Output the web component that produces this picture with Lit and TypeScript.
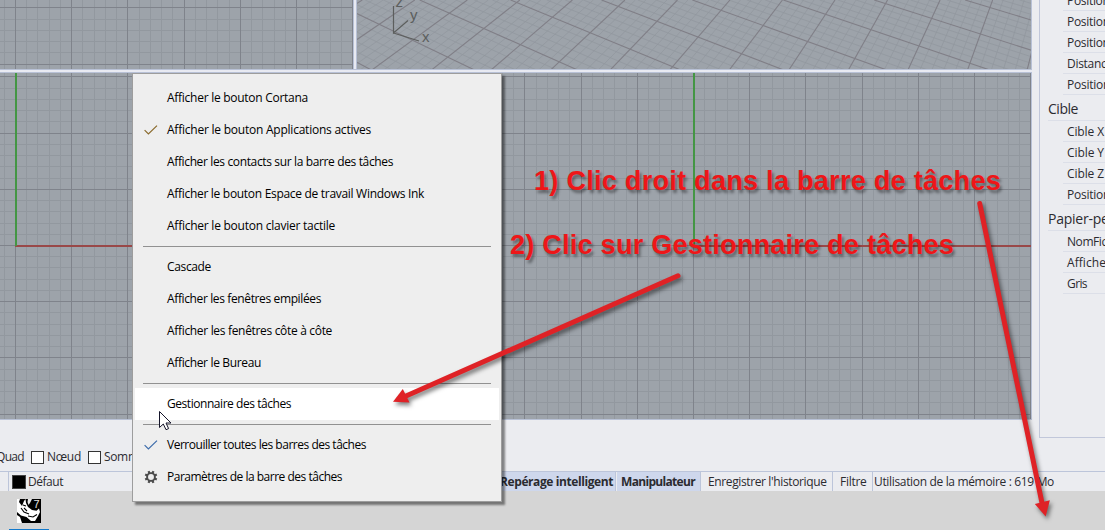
import { LitElement, html, svg, css, nothing } from "lit";
import { customElement, property } from "lit/decorators.js";

/** Text whose letter spacing is adjusted so that it spans a given width. */
@customElement("fit-text")
class FitText extends LitElement {
  static styles = css`
    :host { display: inline-block; white-space: pre; }
  `;
  @property({ type: Number }) w = 0;
  @property() text = "";
  render() {
    return html`<span>${this.text}</span>`;
  }
  updated() {
    const span = this.renderRoot.querySelector("span") as HTMLElement;
    span.style.letterSpacing = "0px";
    if (this.w) {
      const natural = span.getBoundingClientRect().width;
      span.style.letterSpacing = (this.w - natural) / this.text.length + "px";
    }
  }
}

const STEP = 56.22;

/** Orthographic grid of a viewport, with optional axes meeting at (ox, oy). */
function ortho(w: number, h: number, ox: number, oy: number, axes: boolean) {
  const minor: unknown[] = [];
  const major: unknown[] = [];
  const add = (v: number, i: number, vertical: boolean) => {
    const p = Math.round(v);
    const isMajor = ((i % 5) + 5) % 5 === 0;
    const cls = isMajor ? "major" : "minor";
    (isMajor ? major : minor).push(
      vertical
        ? svg`<rect class=${cls} x=${p} y="0" width="1" height=${h}></rect>`
        : svg`<rect class=${cls} x="0" y=${p} width=${w} height="1"></rect>`
    );
  };
  for (let i = -70; i < 70; i++) {
    const x = ox + (i * STEP) / 5;
    const y = oy + (i * STEP) / 5;
    if (x >= -0.5 && x < w) add(x, i, true);
    if (y >= -0.5 && y < h) add(y, i, false);
  }
  return html`<svg class="grid" width=${w} height=${h}>
    ${minor}${major}
    ${axes
      ? svg`<rect class="red" x=${ox} y=${oy} width=${w - ox} height="2"></rect>
            <rect class="green" x=${ox} y="0" width="2" height=${oy + 1}></rect>`
      : nothing}
  </svg>`;
}

/** Perspective grid: two line families running to vanishing points on one horizon. */
function perspective() {
  const horizon = -523;
  const minor: unknown[] = [];
  const major: unknown[] = [];
  const family = (start: number, step: number, vx: number, from: number, to: number) => {
    for (let i = from; i < to; i++) {
      const x0 = start + (i * step) / 5;
      const x1 = x0 + ((x0 - vx) * 70) / -horizon;
      const isMajor = ((i % 5) + 5) % 5 === 0;
      (isMajor ? major : minor).push(
        svg`<line class=${isMajor ? "pmajor" : "pminor"} x1=${x0 - 357} y1="0" x2=${x1 - 357} y2="70"></line>`
      );
    }
  };
  family(419.7, 90.9, -760, -12, 40);
  family(467.3, 52.53, 1180, -12, 64);
  return html`<svg class="grid" width="674" height="69">
    ${minor}${major}
    <g class="gizmo">
      <path d="M36.5 6V33L51 20.5M36.5 33L62 41"></path>
      <text x="38.5" y="7">z</text>
      <text x="53" y="20">y</text>
      <text x="65" y="42">x</text>
    </g>
  </svg>`;
}

const check = (cls: string) => html`<svg class="ico" width="16" height="16" viewBox="0 0 16 16">
  <path class=${cls} d="M2.6 8.2L6.4 12L15 3.6"></path>
</svg>`;

const gear = html`<svg class="ico" width="16" height="16" viewBox="-1 0 16 16">
  <circle class="ring" cx="8" cy="8" r="3.9"></circle>
  ${[0, 45, 90, 135, 180, 225, 270, 315].map(
    (a) => svg`<rect class="tooth" x="6.9" y="1.7" width="2.2" height="2.6" transform="rotate(${a + 22.5} 8 8)"></rect>`
  )}
</svg>`;

type Item = { t: string; w: number; icon?: unknown; hot?: boolean } | null;
const MENU: Item[] = [
  { t: "Afficher le bouton Cortana", w: 141 },
  { t: "Afficher le bouton Applications actives", w: 204, icon: check("tick amber") },
  { t: "Afficher les contacts sur la barre des tâches", w: 226 },
  { t: "Afficher le bouton Espace de travail Windows Ink", w: 257 },
  { t: "Afficher le bouton clavier tactile", w: 168 },
  null,
  { t: "Cascade", w: 44 },
  { t: "Afficher les fenêtres empilées", w: 154 },
  { t: "Afficher les fenêtres côte à côte", w: 165 },
  { t: "Afficher le Bureau", w: 94 },
  null,
  { t: "Gestionnaire des tâches", w: 124, hot: true },
  null,
  { t: "Verrouiller toutes les barres des tâches", w: 199, icon: check("tick blue") },
  { t: "Paramètres de la barre des tâches", w: 175, icon: gear },
];

const PROPS: [string, boolean, number?][] = [
  ["Position X", false, 52], ["Position Y", false, 52], ["Position Z", false, 52], ["Distance", false, 46], ["Position", false, 43],
  ["Cible", true, 30],
  ["Cible X", false, 37], ["Cible Y", false, 37], ["Cible Z", false, 37], ["Position", false, 43],
  ["Papier-peint", true, 77],
  ["NomFichier", false, 60], ["Afficher", false, 44], ["Gris", false, 20],
];

@customElement("app-root")
class AppRoot extends LitElement {
  static styles = css`
    :host {
      display: block; position: relative; width: 1105px; height: 530px; overflow: hidden;
      background: #ebecf0; color: #2b2b30;
      font: 12px/16px "Open Sans", "Noto Sans", sans-serif;
    }
    * { box-sizing: border-box; }
    .app { display: flex; flex-direction: column; height: 530px; }
    .work { display: flex; height: 438px; }
    .views { width: 1032px; height: 420px; display: flex; flex-direction: column; background: #e8eaf2; flex: none; }
    .row { display: flex; }
    .row.top { height: 70px; gap: 2px; border-bottom: 1px solid #b8c1d6; }
    .row.bottom { height: 348px; margin-top: 2px; border-top: 1px solid #b8c1d6; border-bottom: 1px solid #b8c1d6; gap: 2px; }
    .vp { background: #9da3aa; border-right: 1px solid #b8c1d6; overflow: hidden; }
    .vp.lead { border-left: 1px solid #b8c1d6; }
    .grid { display: block; }
    .minor { fill: #92989f; }
    .major { fill: #7f838b; }
    .red { fill: #994848; }
    .green { fill: #449644; }
    .pminor { stroke: #90969e; stroke-width: 0.7; }
    .pmajor { stroke: #807f87; stroke-width: 1.1; }
    .gizmo path { fill: none; stroke: #5c5e5d; stroke-width: 1.2; }
    .gizmo text { font: 15px "Liberation Sans", sans-serif; fill: #5c5e5d; }
    .panel { margin-left: 7px; width: 66px; height: 438px; border-left: 1px solid #c1c7da; border-bottom: 1px solid #c1c7da; overflow: hidden; flex: none; }
    .list { margin-top: -10px; }
    .prop { height: 21px; margin-left: 23px; padding-left: 4px; border-bottom: 1px solid #dcdfe8; line-height: 22px; white-space: nowrap; }
    .head { height: 26px; margin-left: 8px; border-bottom: 1px solid #dcdfe8; font-size: 14px; line-height: 27px; white-space: nowrap; }
    .snaps { height: 33px; display: flex; align-items: center; padding-top: 5px; white-space: nowrap; }
    .quad { width: 24px; margin-right: 7px; display: flex; justify-content: flex-end; }
    .box { width: 13px; height: 13px; border: 1px solid #333; background: #fff; margin-right: 3px; }
    .nd { width: 41px; }
    .status { height: 20px; border-top: 1px solid #bcc5da; display: flex; line-height: 20px; white-space: nowrap; }
    .cell { border-right: 1px solid #bcc5da; flex: none; }
    .c0 { width: 9px; }
    .c1 { width: 475px; display: flex; padding-left: 3px; }
    .swatch { width: 14px; height: 14px; margin: 3px 2px 0 0; background: #000; border: 1px solid #444; }
    .c2 { width: 132px; padding-left: 16px; background: #ced7ec; font-weight: 700; }
    .c3 { width: 85px; padding-left: 4px; border-left: 1px solid #ebecf0; background: #ced7ec; font-weight: 700; }
    .c4 { width: 132px; padding-left: 7px; }
    .c5 { width: 40px; padding-left: 7px; }
    .c6 { padding-left: 1px; }
    .task { height: 39px; background: #d5d5d5; padding-left: 9px; display: flex; flex: none; }
    .tab { width: 40px; height: 39px; border-bottom: 1px solid #1279cc; padding: 8px 0 0 8px; }
    .logo { display: block; }
    .seven { font: 11px "Liberation Sans", sans-serif; fill: #e4e4e4; }

    .menu { position: absolute; left: 132px; top: 73px; width: 370px; height: 429px; padding: 8px 2px; background: #eeeeee; border: 1px solid #9d9d9d; box-shadow: 3px 3px 2px rgba(0, 0, 0, 0.45); color: #000; clip-path: inset(0 -8px -8px 0); }
    .item { height: 32px; display: flex; align-items: center; padding-left: 7px; }
    .item.hot { background: #fff; }
    .slot { width: 25px; height: 16px; }
    .sep { height: 9px; padding: 4px 8px; }
    .sep::before { content: ""; display: block; height: 1px; background: #919191; }
    .ico { display: block; }
    .tick { fill: none; stroke-width: 1.2; }
    .amber { stroke: #8a6a2c; }
    .blue { stroke: #3d6cab; }
    .ring { fill: none; stroke: #4b4b4b; stroke-width: 1.9; }
    .tooth { fill: #4b4b4b; }

    .note { position: absolute; font: 700 27px/32px "Liberation Sans", Arial, sans-serif; color: #ee1618; text-shadow: 2px 3px 3px rgba(0, 0, 0, 0.4); }
    .n1 { left: 534px; top: 165px; }
    .n2 { left: 510px; top: 229px; }
    .over { position: absolute; left: 0; top: 0; }
    .arrows { filter: drop-shadow(2px 3px 2px rgba(0, 0, 0, 0.5)); fill: #df2226; }
    .shaft { stroke: #df2226; stroke-width: 5; stroke-linecap: round; }
    .cursor { fill: #fff; stroke: #15152a; stroke-width: 1; }
  `;

  render() {
    return html`
      <div class="app">
        <div class="work">
          <div class="views">
            <div class="row top">
              <div class="vp">${ortho(353, 69, 15, 7.3, false)}</div>
              <div class="vp lead">${perspective()}</div>
            </div>
            <div class="row bottom">
              <div class="vp">${ortho(353, 346, 15, 172, true)}</div>
              <div class="vp lead">${ortho(674, 346, 336, 172, true)}</div>
            </div>
          </div>
          <div class="panel">
            <div class="list">
              ${PROPS.map(([t, head, w]) => html`<div class=${head ? "head" : "prop"}><fit-text .text=${t} .w=${w ?? 0}></fit-text></div>`)}
            </div>
          </div>
        </div>
        <div class="snaps">
          <span class="quad"><fit-text .text=${"Quad"} .w=${28}></fit-text></span>
          <span class="box"></span><span class="nd"><fit-text .text=${"Nœud"} .w=${34}></fit-text></span>
          <span class="box"></span><fit-text .text=${"Sommet"} .w=${45}></fit-text>
        </div>
        <div class="status">
          <div class="cell c0"></div>
          <div class="cell c1"><span class="swatch"></span><fit-text .text=${"Défaut"} .w=${35}></fit-text></div>
          <div class="cell c2"><fit-text .text=${"Repérage intelligent"} .w=${113}></fit-text></div>
          <div class="cell c3"><fit-text .text=${"Manipulateur"} .w=${74}></fit-text></div>
          <div class="cell c4"><fit-text .text=${"Enregistrer l'historique"} .w=${118.5}></fit-text></div>
          <div class="cell c5"><fit-text .text=${"Filtre"} .w=${26.5}></fit-text></div>
          <div class="c6"><fit-text .text=${"Utilisation de la mémoire : 619 Mo"} .w=${180}></fit-text></div>
        </div>
        <div class="task">
          <div class="tab">
            <svg class="logo" width="24" height="24" viewBox="0 0 24 24">
              <rect width="24" height="24" fill="#000"></rect>
              <path fill="#fff" d="M0 0H3L2 3L5 7L7 2L8.5 0L9 4L11 8L15 11L19.5 11.8L22 9.5L23 13L21 17L18 22H14L9.5 18L4 16.5L0 13Z"></path>
              <path fill="#e8e8e8" d="M11 0H15L13 4L11.5 6L10.5 3Z"></path>
              <path fill="#fff" d="M0 16L3 18L5 24H0Z"></path>
              <path fill="none" stroke="#000" stroke-width="1.1" d="M4 9L7 13L12 15M7 9L10 12M11 17L16 18L20 15.5M6 6L9 7"></path>
              <text class="seven" x="16.5" y="9">7</text>
            </svg>
          </div>
        </div>
      </div>

      <div class="menu">
        ${MENU.map((m) =>
          m
            ? html`<div class="item ${m.hot ? "hot" : ""}"><span class="slot">${m.icon ?? nothing}</span><fit-text .text=${m.t} .w=${m.w}></fit-text></div>`
            : html`<div class="sep"></div>`
        )}
      </div>

      <div class="note n1"><fit-text .text=${"1) Clic droit dans la barre de tâches"} .w=${467}></fit-text></div>
      <div class="note n2"><fit-text .text=${"2) Clic sur Gestionnaire de tâches"} .w=${444}></fit-text></div>

      <svg class="over" width="1105" height="530">
        <g class="arrows">
          <line class="shaft" x1="979.7" y1="203.5" x2="1042" y2="503"></line>
          <path d="M1045.7 516.5L1034.8 504L1049.8 500.3Z"></path>
          <line class="shaft" x1="678" y1="275.8" x2="406" y2="396"></line>
          <path d="M393 401.7L402.8 389L409.5 402.6Z"></path>
        </g>
        <path class="cursor" d="M159.5 411.5V427.5L163.3 424L166 429.7L168.6 428.6L166 423H171Z"></path>
      </svg>
    `;
  }
}
